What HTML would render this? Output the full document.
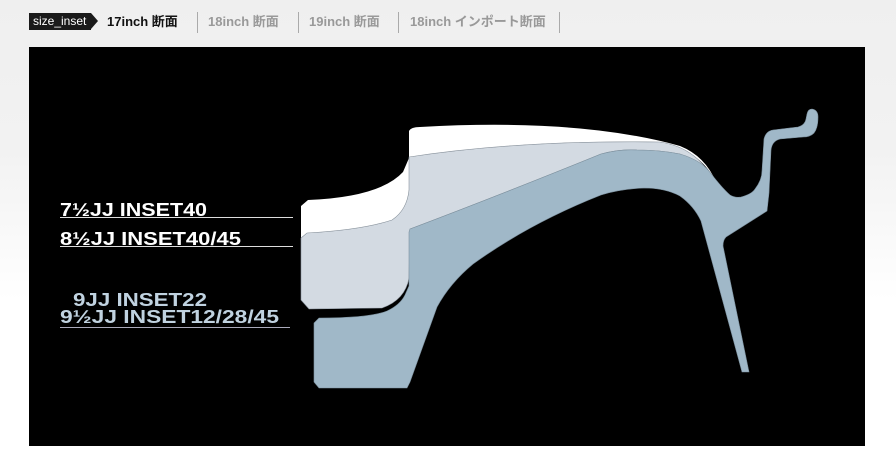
<!DOCTYPE html>
<html><head><meta charset="utf-8"><style>
html,body{margin:0;padding:0}
body{width:896px;height:469px;position:relative;overflow:hidden;background:linear-gradient(#efefef 0px,#f2f2f2 150px,#fff 300px);font-family:"Liberation Sans","Noto Sans CJK JP",sans-serif}
.tag{position:absolute;left:29px;top:13px;height:17px;width:62px;background:#1a1a1a;color:#fff;font-size:12px;line-height:17px;padding-left:4px;box-sizing:border-box}
.tag:after{content:"";position:absolute;right:-7px;top:0;border-left:7px solid #1a1a1a;border-top:8.5px solid transparent;border-bottom:8.5px solid transparent}
.tab{position:absolute;top:13px;font-size:13px;font-weight:bold;line-height:17px;color:#999}
.sep{position:absolute;top:12px;width:1px;height:21px;background:#aaa}
.panel{position:absolute;left:29px;top:47px;width:836px;height:399px;background:#000}
svg{position:absolute;left:0;top:0}
</style></head><body>
<div class="tag">size_inset</div>
<div class="tab" style="left:107px;color:#111">17inch 断面</div>
<div class="sep" style="left:197px"></div>
<div class="tab" style="left:208px">18inch 断面</div>
<div class="sep" style="left:298px"></div>
<div class="tab" style="left:309px">19inch 断面</div>
<div class="sep" style="left:398px"></div>
<div class="tab" style="left:410px">18inch インポート断面</div>
<div class="sep" style="left:559px"></div>
<div class="panel"></div>
<svg width="896" height="469" viewBox="0 0 896 469">
<path d="M301,206 L308,200 Q380,197 403,172 L409,158 L409,131 Q411,127 420,127 Q580,118 680,146 Q705,156 716,182 Q700,150 660,142 Q520,140 409,157 L409,190 Q407,210 392,220 Q362,230 307,233 L301,238 Z" fill="#fff"/>
<path d="M301,238 L307,233 Q362,230 392,220 Q407,210 409,190 L409,157 Q520,140 660,142 Q700,148 716,186 Q700,162 680,154 Q660,150 637,150 Q620,149 601,154 Q500,195 410,229 L409,278 Q405,300 382,308 L309,309 L301,300 Z" fill="#d3dae2" stroke="#8a949e" stroke-width="0.6"/>
<path d="M410,229 Q500,195 601,154 Q620,149 637,150 Q660,150 680,154 Q700,160 709,171 Q722,188 730,195 Q735,198 741,197 Q752,194 755,189 Q762,180 762,171 L764,139 Q766,131 773,130 L798,127 Q805,125 806,119 L807,114 Q808,109 812,109 Q818,110 818,117 Q818,128 814,133 Q810,137 803,137 L780,139 Q772,141 771,150 L769,193 L767,211 L726,237 Q723,240 723,246 L749,372 L742,372 L701,221 Q694,206 680,196 Q665,188 644,188 Q620,189 601,195 Q530,223 473,264 Q450,283 437,307 L410,382 L407,388 L319,388 L314,382 L314,323 L319,318 Q370,318 387,311 Q400,305 405,295 L409,286 L409,232 Z" fill="#a0b8c8" stroke="#7c909e" stroke-width="0.6"/>
<g font-family="Liberation Sans, sans-serif" font-weight="bold" font-size="18">
<text x="60" y="216" fill="#fff" textLength="147" lengthAdjust="spacingAndGlyphs">7½JJ INSET40</text>
<text x="60" y="245" fill="#fff" textLength="181" lengthAdjust="spacingAndGlyphs">8½JJ INSET40/45</text>
<text x="73" y="306" fill="#c0d2e0" textLength="134" lengthAdjust="spacingAndGlyphs">9JJ INSET22</text>
<text x="60" y="323" fill="#c0d2e0" textLength="219" lengthAdjust="spacingAndGlyphs">9½JJ INSET12/28/45</text>
</g>
<line x1="60" y1="217.5" x2="293" y2="217.5" stroke="#ddd" stroke-width="1"/>
<line x1="60" y1="246.5" x2="293" y2="246.5" stroke="#ddd" stroke-width="1"/>
<line x1="60" y1="327.5" x2="290" y2="327.5" stroke="#aab" stroke-width="1"/>
</svg>
</body></html>
